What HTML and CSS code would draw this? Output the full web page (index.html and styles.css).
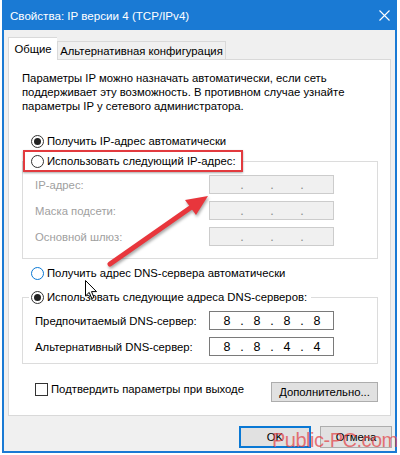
FILE: index.html
```html
<!DOCTYPE html>
<html lang="ru">
<head>
<meta charset="utf-8">
<title>Свойства: IP версии 4 (TCP/IPv4)</title>
<link rel="stylesheet" href="styles.css">
</head>
<body>
<div class="window">
  <div class="titlebar">
    <span class="title">Свойства: IP версии 4 (TCP/IPv4)</span>
    <svg class="close" width="11" height="11" viewBox="0 0 11 11"><path d="M0.5 0.5 L10.5 10.5 M10.5 0.5 L0.5 10.5" stroke="#fff" stroke-width="1.1" fill="none"/></svg>
  </div>
  <div class="content">
    <div class="tabs">
      <div class="tab tab-active">Общие</div>
      <div class="tab">Альтернативная конфигурация</div>
    </div>
    <div class="panel">
      <p class="desc">Параметры IP можно назначать автоматически, если сеть<br>поддерживает эту возможность. В противном случае узнайте<br>параметры IP у сетевого администратора.</p>
      <div class="opt"><span class="radio radio-checked"></span>Получить IP-адрес автоматически</div>
      <div class="group group-ip">
        <div class="legend legend-marked"><span class="radio"></span>Использовать следующий IP-адрес:</div>
        <div class="field field-disabled">
          <span class="label">IP-адрес:</span>
          <span class="ipbox"><span class="seg"></span><span class="dot">.</span><span class="seg"></span><span class="dot">.</span><span class="seg"></span><span class="dot">.</span><span class="seg"></span></span>
        </div>
        <div class="field field-disabled">
          <span class="label">Маска подсети:</span>
          <span class="ipbox"><span class="seg"></span><span class="dot">.</span><span class="seg"></span><span class="dot">.</span><span class="seg"></span><span class="dot">.</span><span class="seg"></span></span>
        </div>
        <div class="field field-disabled">
          <span class="label">Основной шлюз:</span>
          <span class="ipbox"><span class="seg"></span><span class="dot">.</span><span class="seg"></span><span class="dot">.</span><span class="seg"></span><span class="dot">.</span><span class="seg"></span></span>
        </div>
      </div>
      <div class="opt opt-dns"><span class="radio radio-hover"></span>Получить адрес DNS-сервера автоматически</div>
      <div class="group group-dns">
        <div class="legend"><span class="radio radio-checked"></span>Использовать следующие адреса DNS-серверов:</div>
        <div class="field">
          <span class="label">Предпочитаемый DNS-сервер:</span>
          <span class="ipbox"><span class="seg">8</span><span class="dot">.</span><span class="seg">8</span><span class="dot">.</span><span class="seg">8</span><span class="dot">.</span><span class="seg">8</span></span>
        </div>
        <div class="field">
          <span class="label">Альтернативный DNS-сервер:</span>
          <span class="ipbox"><span class="seg">8</span><span class="dot">.</span><span class="seg">8</span><span class="dot">.</span><span class="seg">4</span><span class="dot">.</span><span class="seg">4</span></span>
        </div>
      </div>
      <div class="panel-foot">
        <div class="check"><span class="checkbox"></span>Подтвердить параметры при выходе</div>
        <button class="btn btn-advanced">Дополнительно...</button>
      </div>
    </div>
    <div class="actions">
      <button class="btn btn-default">OK</button>
      <button class="btn">Отмена</button>
    </div>
  </div>
</div>
<svg class="arrow" width="400" height="455" viewBox="0 0 400 455">
  <g class="arrow-shape">
    <path d="M110 264 L193 206" stroke="#e8363c" stroke-width="5" stroke-linecap="round" fill="none"/>
    <polygon points="208,196 196,215 185,200" fill="#e8363c"/>
  </g>
</svg>
<svg class="cursor" width="13" height="20" viewBox="0 0 13 20"><path d="M0.5 0.5 L0.5 16 L4.2 12.4 L6.8 18.5 L9 17.5 L6.5 11.6 L11.5 11.6 Z" fill="#fff" stroke="#000" stroke-width="1" stroke-linejoin="round"/></svg>
<div class="watermark">Public-PC.com</div>
</body>
</html>
```
FILE: styles.css
```css
body {
  margin: 0;
  width: 400px;
  height: 455px;
  position: relative;
  overflow: hidden;
  background: #fff;
  font-family: "Liberation Sans", Arial, sans-serif;
  font-size: 11.3px;
  color: #000;
}

.window {
  margin-left: 2px;
  width: 395px;
  height: 453px;
  box-sizing: border-box;
  border: 2px solid #1a7ad4;
  border-top: 0;
  background: #f0f0f0;
  display: flex;
  flex-direction: column;
}

.titlebar {
  height: 30px;
  flex: 0 0 30px;
  background: #1a7ad4;
  display: flex;
  align-items: center;
  justify-content: space-between;
  padding: 0 5px 0 6px;
  color: #fff;
  font-size: 11.6px;
}

.close { display: block; }

.content {
  padding: 0 4px;
  display: flex;
  flex-direction: column;
}

.tabs {
  display: flex;
  align-items: flex-end;
  margin-top: 7px;
  height: 22px;
}

.tab {
  height: 18px;
  box-sizing: border-box;
  border: 1px solid #d9d9d9;
  border-bottom: 0;
  background: #f0f0f0;
  display: flex;
  align-items: center;
  justify-content: center;
  width: 169px;
  white-space: nowrap;
}

.tab-active {
  width: 49px;
  height: 23px;
  margin-bottom: -1px;
  background: #fff;
  position: relative;
  z-index: 1;
  border-right: 0;
}

.panel {
  height: 357px;
  box-sizing: border-box;
  border: 1px solid #d9d9d9;
  background: #fff;
  padding: 0 12px 0 13px;
  display: flex;
  flex-direction: column;
}

.desc {
  margin: 11px 0 0;
  line-height: 14px;
  white-space: nowrap;
}

.opt {
  display: flex;
  align-items: center;
  height: 16px;
  margin-top: 20px;
  padding-left: 9px;
}

.opt-dns { margin-top: 6px; }

.radio {
  width: 13px;
  height: 13px;
  box-sizing: border-box;
  border: 1px solid #333;
  border-radius: 50%;
  margin-right: 3px;
  display: flex;
  align-items: center;
  justify-content: center;
  background: #fff;
  flex: 0 0 13px;
}

.radio-checked::after {
  content: "";
  width: 7px;
  height: 7px;
  border-radius: 50%;
  background: #222;
}

.radio-hover { border-color: #0a78d4; }

.group {
  border: 1px solid #dcdcdc;
  display: flex;
  flex-direction: column;
}

.group-ip {
  margin-top: 12px;
  padding-bottom: 12px;
}

.group-dns {
  margin-top: 16px;
  padding-bottom: 7px;
}

.legend {
  align-self: flex-start;
  display: flex;
  align-items: center;
  background: #fff;
  height: 16px;
  margin: -9px 0 0 6px;
  padding: 0 4px 0 2px;
  white-space: nowrap;
}

.legend-marked {
  height: 18px;
  margin: -12px 0 0 0;
  padding: 0 5px 0 6px;
  border: 2px solid #e23a3e;
  box-shadow: 0 1px 2px rgba(0, 0, 0, 0.35);
}

.field {
  display: flex;
  align-items: center;
  height: 19px;
  padding-left: 12px;
  margin-top: 7px;
}

.legend + .field { margin-top: 3px; }
.group-dns .legend + .field { margin-top: 6px; }

.label { flex: 0 0 174px; white-space: nowrap; }

.field-disabled .label { color: #a0a0a0; }

.ipbox {
  width: 125px;
  height: 19px;
  box-sizing: border-box;
  border: 1px solid #7a7a7a;
  background: #fff;
  display: flex;
  align-items: center;
  padding-left: 2px;
  font-size: 12.5px;
}

.field-disabled .ipbox {
  background: #f0f0f0;
  border-color: #cccccc;
  color: #8a8a8a;
}

.seg {
  width: 30px;
  text-align: center;
}

.dot {
  width: 0;
  display: flex;
  justify-content: center;
}

.panel-foot {
  display: flex;
  justify-content: space-between;
  align-items: flex-start;
  margin-top: 18px;
}

.check {
  display: flex;
  align-items: center;
  margin-left: 13px;
  height: 14px;
}

.checkbox {
  width: 13px;
  height: 13px;
  box-sizing: border-box;
  border: 1px solid #333;
  background: #fff;
  margin-right: 3px;
}

.btn {
  font: inherit;
  color: #000;
  background: #e1e1e1;
  border: 1px solid #adadad;
  padding: 0;
  margin: 0;
  height: 20px;
}

.btn-advanced { width: 107px; }

.actions {
  display: flex;
  justify-content: flex-end;
  gap: 9px;
  margin-top: 10px;
  margin-right: -1px;
}

.actions .btn {
  width: 72px;
  height: 22px;
}

.actions .btn-default {
  border: 2px solid #0a78d4;
}

.arrow {
  position: absolute;
  left: 0;
  top: 0;
  pointer-events: none;
}

.arrow-shape {
  filter: drop-shadow(1px 2px 1.5px rgba(0, 0, 0, 0.35));
}

.cursor {
  position: absolute;
  left: 85px;
  top: 280px;
}

.watermark {
  position: absolute;
  left: 272px;
  top: 431px;
  line-height: 19px;
  white-space: nowrap;
  font-family: "Liberation Sans", Arial, sans-serif;
  font-size: 20px;
  letter-spacing: -0.5px;
  color: rgba(226, 66, 70, 0.72);
}
```
